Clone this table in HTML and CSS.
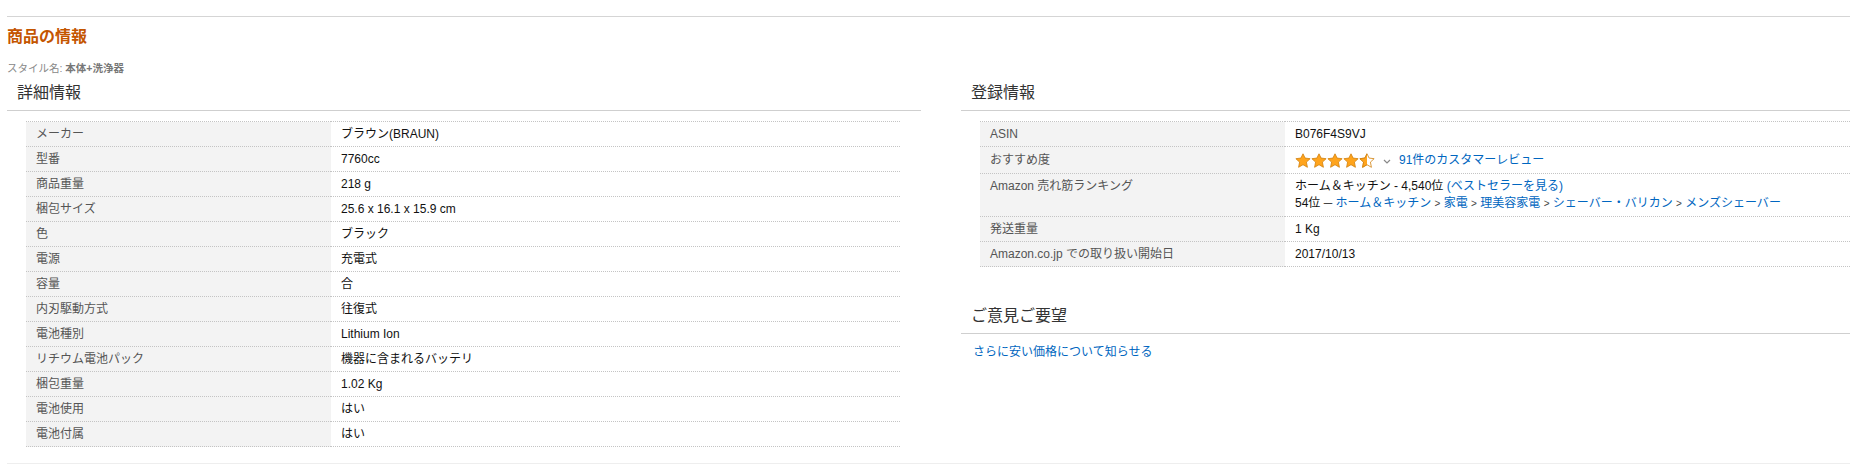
FILE: index.html
```html
<!DOCTYPE html>
<html lang="ja">
<head>
<meta charset="utf-8">
<title>商品の情報</title>
<link rel="stylesheet" href="styles.css">
</head>
<body>
<div class="page">
  <div class="top-rule"></div>
  <h2 class="title">商品の情報</h2>
  <div class="style-line">スタイル名: <b>本体+洗浄器</b></div>
  <div class="cols">
    <section class="col">
      <h3 class="sec-head">詳細情報</h3>
      <table class="spec">
        <colgroup><col class="c-label"><col></colgroup>
        <tr><th>メーカー</th><td>ブラウン(BRAUN)</td></tr>
        <tr><th>型番</th><td>7760cc</td></tr>
        <tr><th>商品重量</th><td>218 g</td></tr>
        <tr><th>梱包サイズ</th><td>25.6 x 16.1 x 15.9 cm</td></tr>
        <tr><th>色</th><td>ブラック</td></tr>
        <tr><th>電源</th><td>充電式</td></tr>
        <tr><th>容量</th><td>合</td></tr>
        <tr><th>内刃駆動方式</th><td>往復式</td></tr>
        <tr><th>電池種別</th><td>Lithium Ion</td></tr>
        <tr><th>リチウム電池パック</th><td>機器に含まれるバッテリ</td></tr>
        <tr><th>梱包重量</th><td>1.02 Kg</td></tr>
        <tr><th>電池使用</th><td>はい</td></tr>
        <tr><th>電池付属</th><td>はい</td></tr>
      </table>
    </section>
    <section class="col">
      <h3 class="sec-head">登録情報</h3>
      <table class="spec">
        <colgroup><col class="c-label"><col></colgroup>
        <tr><th>ASIN</th><td>B076F4S9VJ</td></tr>
        <tr class="rating-row"><th>おすすめ度</th><td>
          <div class="rating">
            <span class="stars">
              <svg viewBox="0 0 16 16" class="star"><path d="M8 0.8 L10.12 5.09 L15.13 5.68 L11.42 9.11 L12.41 14.3 L8 11.7 L3.59 14.3 L4.58 9.11 L0.87 5.68 L5.88 5.09 Z"/></svg>
              <svg viewBox="0 0 16 16" class="star"><path d="M8 0.8 L10.12 5.09 L15.13 5.68 L11.42 9.11 L12.41 14.3 L8 11.7 L3.59 14.3 L4.58 9.11 L0.87 5.68 L5.88 5.09 Z"/></svg>
              <svg viewBox="0 0 16 16" class="star"><path d="M8 0.8 L10.12 5.09 L15.13 5.68 L11.42 9.11 L12.41 14.3 L8 11.7 L3.59 14.3 L4.58 9.11 L0.87 5.68 L5.88 5.09 Z"/></svg>
              <svg viewBox="0 0 16 16" class="star"><path d="M8 0.8 L10.12 5.09 L15.13 5.68 L11.42 9.11 L12.41 14.3 L8 11.7 L3.59 14.3 L4.58 9.11 L0.87 5.68 L5.88 5.09 Z"/></svg>
              <svg viewBox="0 0 16 16" class="star half">
                <defs><clipPath id="lefthalf"><rect x="0" y="0" width="8" height="16"/></clipPath></defs>
                <path class="outline" d="M8 0.8 L10.12 5.09 L15.13 5.68 L11.42 9.11 L12.41 14.3 L8 11.7 L3.59 14.3 L4.58 9.11 L0.87 5.68 L5.88 5.09 Z"/>
                <path class="fill" clip-path="url(#lefthalf)" d="M8 0.8 L10.12 5.09 L15.13 5.68 L11.42 9.11 L12.41 14.3 L8 11.7 L3.59 14.3 L4.58 9.11 L0.87 5.68 L5.88 5.09 Z"/>
              </svg>
            </span>
            <svg class="chev" viewBox="0 0 8 5"><polyline points="1,1 4,4 7,1"/></svg>
            <a href="#" class="link">91件のカスタマーレビュー</a>
          </div>
        </td></tr>
        <tr class="rank-row"><th>Amazon 売れ筋ランキング</th><td>
          <div>ホーム＆キッチン - 4,540位 <a href="#" class="link">(ベストセラーを見る)</a></div>
          <div>54位 ─ <a href="#" class="link">ホーム＆キッチン</a> <span class="sep">&gt;</span> <a href="#" class="link">家電</a> <span class="sep">&gt;</span> <a href="#" class="link">理美容家電</a> <span class="sep">&gt;</span> <a href="#" class="link">シェーバー・バリカン</a> <span class="sep">&gt;</span> <a href="#" class="link">メンズシェーバー</a></div>
        </td></tr>
        <tr><th>発送重量</th><td>1 Kg</td></tr>
        <tr><th>Amazon.co.jp での取り扱い開始日</th><td>2017/10/13</td></tr>
      </table>
      <h3 class="sec-head feedback">ご意見ご要望</h3>
      <a href="#" class="link feedback-link">さらに安い価格について知らせる</a>
    </section>
  </div>
  <div class="bottom-rule"></div>
</div>
</body>
</html>
```

FILE: styles.css
```css
html, body {
  margin: 0;
  padding: 0;
  overflow: hidden;
  background: #fff;
}

body {
  font-family: "Liberation Sans", Arial, "Noto Sans CJK JP", sans-serif;
  font-size: 12px;
  color: #111;
}

.page {
  padding-top: 16px;
  padding-left: 7px;
}

.top-rule {
  border-top: 1px solid #d5d5d5;
}

.title {
  margin: 8px 0 0;
  font-size: 16px;
  line-height: 24px;
  font-weight: bold;
  color: #c45500;
}

.style-line {
  margin-top: 11px;
  font-size: 10.5px;
  line-height: 16px;
  color: #888;
}

.style-line b {
  color: #777;
}

.cols {
  display: grid;
  grid-template-columns: 914px 914px;
  column-gap: 40px;
  margin-top: 5px;
  align-items: start;
}

.sec-head {
  margin: 0;
  padding: 0 0 5px 10px;
  font-size: 16px;
  line-height: 24px;
  font-weight: normal;
  color: #333;
  border-bottom: 1px solid #cfcfcf;
}

.spec {
  margin: 10px 21px 0 19px;
  width: calc(100% - 40px);
  border-collapse: collapse;
  table-layout: fixed;
  border-top: 1px dotted #c4c4c4;
}

.c-label {
  width: 305px;
}

.spec th,
.spec td {
  padding: 4px 10px 3px;
  line-height: 17px;
  text-align: left;
  vertical-align: top;
  border-bottom: 1px dotted #c4c4c4;
  white-space: nowrap;
}

.spec th {
  font-weight: normal;
  color: #555;
  background: #f3f3f3;
}

.spec td {
  color: #111;
}

.rating-row th,
.rating-row td {
  padding-top: 5px;
  padding-bottom: 4px;
}

.rank-row th,
.rank-row td {
  padding-bottom: 4px;
}

.rating {
  display: flex;
  align-items: center;
  height: 17px;
}

.stars {
  display: flex;
  gap: 0;
}

.star {
  width: 16px;
  height: 16px;
  display: block;
}

.star path {
  fill: #ffa41c;
  stroke: #d0800d;
  stroke-width: 0.8;
  stroke-linejoin: round;
}

.star.half .outline {
  fill: #fff;
}

.chev {
  width: 8px;
  height: 5px;
  margin-left: 8px;
  margin-top: 2px;
}

.chev polyline {
  fill: none;
  stroke: #888;
  stroke-width: 1.2;
}

.rating .link {
  margin-left: 8px;
}

.link {
  color: #0066c0;
  text-decoration: none;
}

.sep {
  color: #444;
  font-size: 10px;
}

.sec-head.feedback {
  margin-top: 37px;
}

.feedback-link {
  display: block;
  margin-top: 10px;
  padding-left: 12px;
  line-height: 17px;
}

.bottom-rule {
  margin-top: 16px;
  border-top: 1px solid #eee;
}
```
